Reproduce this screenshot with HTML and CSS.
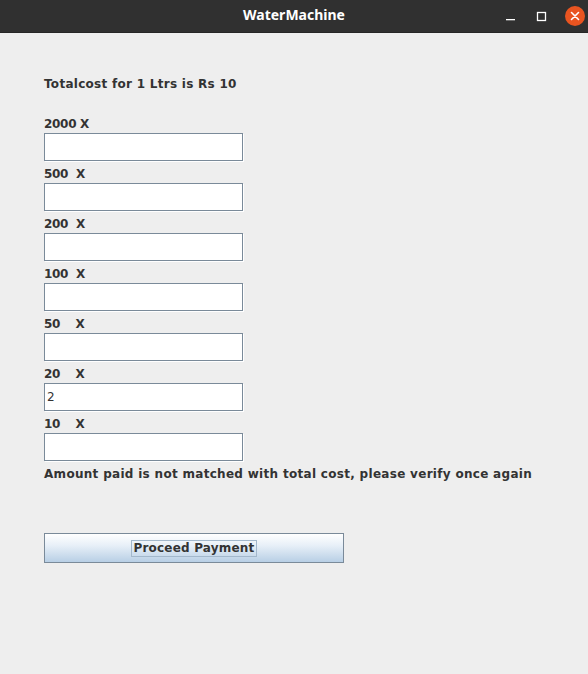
FILE: index.html
```html
<!DOCTYPE html>
<html>
<head>
<meta charset="utf-8">
<link rel="stylesheet" href="styles.css">
</head>
<body>
<div class="window">
  <header class="titlebar">
    <span class="title">WaterMachine</span>
    <div class="controls">
      <svg class="ctl" width="12" height="12" viewBox="0 0 12 12"><rect x="1" y="9" width="9" height="1.3" fill="#ffffff"/></svg>
      <svg class="ctl" width="12" height="12" viewBox="0 0 12 12"><rect x="2.5" y="2.5" width="8" height="8" fill="none" stroke="#ffffff" stroke-width="1.3"/></svg>
      <svg class="close" width="20" height="20" viewBox="0 0 20 20"><circle cx="10" cy="10" r="10" fill="#e95420"/><path d="M6.5 6.5 L13.5 13.5 M13.5 6.5 L6.5 13.5" stroke="#ffffff" stroke-width="1.6" stroke-linecap="round"/></svg>
    </div>
  </header>
  <main class="content">
    <p class="total">Totalcost for 1 Ltrs is Rs 10</p>
    <div class="rows">
      <div class="row"><label class="lbl">2000 X</label><div class="field"></div></div>
      <div class="row"><label class="lbl">500  X</label><div class="field"></div></div>
      <div class="row"><label class="lbl">200  X</label><div class="field"></div></div>
      <div class="row"><label class="lbl">100  X</label><div class="field"></div></div>
      <div class="row"><label class="lbl">50    X</label><div class="field"></div></div>
      <div class="row"><label class="lbl">20    X</label><div class="field">2</div></div>
      <div class="row"><label class="lbl">10    X</label><div class="field"></div></div>
    </div>
    <p class="msg">Amount paid is not matched with total cost, please verify once again</p>
    <button class="btn"><span class="focus">Proceed Payment</span></button>
  </main>
</div>
</body>
</html>
```

FILE: styles.css
```css
html, body {
  margin: 0;
  padding: 0;
  background: #eeeeee;
}
.window {
  width: 588px;
  height: 674px;
  display: flex;
  flex-direction: column;
  background: #eeeeee;
  font-family: "DejaVu Sans", sans-serif;
}
.titlebar {
  background: #303030;
  border-bottom: 1px solid #262626;
  box-sizing: border-box;
  height: 33px;
  padding-bottom: 3px;
  display: flex;
  align-items: center;
  justify-content: center;
  position: relative;
}
.title {
  color: #ffffff;
  font-family: "Noto Sans", sans-serif;
  font-weight: bold;
  font-size: 14px;
}
.controls {
  position: absolute;
  right: 3px;
  top: 6px;
  display: flex;
  align-items: center;
  gap: 18px;
}
.ctl { display: block; }
.close { display: block; }
.content {
  padding: 0 0 0 44px;
  color: #333333;
  font-weight: bold;
  font-size: 12px;
}
.total {
  margin: 43px 0 0 0;
  line-height: 16px;
  height: 16px;
  letter-spacing: 0.28px;
}
.rows {
  margin-top: 24px;
  display: flex;
  flex-direction: column;
  gap: 5px;
}
.row {
  display: flex;
  flex-direction: column;
}
.lbl {
  white-space: pre;
  line-height: 17px;
  height: 17px;
  letter-spacing: -0.3px;
}
.field {
  height: 26px;
  width: 195px;
  padding-left: 2px;
  border: 1px solid #7a8a99;
  box-shadow: 1px 1px 0 #ffffff;
  background: #ffffff;
  font-weight: normal;
  font-size: 12px;
  color: #333333;
  line-height: 26px;
}
.msg {
  margin: 5px 0 0 0;
  line-height: 16px;
  height: 16px;
  letter-spacing: 0.3px;
}
.btn {
  margin-top: 51px;
  width: 300px;
  height: 30px;
  border: 1px solid #7a8a99;
  background: linear-gradient(to bottom, #ffffff 0%, #e8f0f8 40%, #b8cfe5 100%);
  display: flex;
  align-items: center;
  justify-content: center;
  padding: 0;
  font-family: "DejaVu Sans", sans-serif;
  font-weight: bold;
  font-size: 12px;
  color: #333333;
  letter-spacing: 0.2px;
}
.focus {
  border: 1px solid #a3b8cc;
  padding: 0 1px;
  line-height: 15px;
}
```
